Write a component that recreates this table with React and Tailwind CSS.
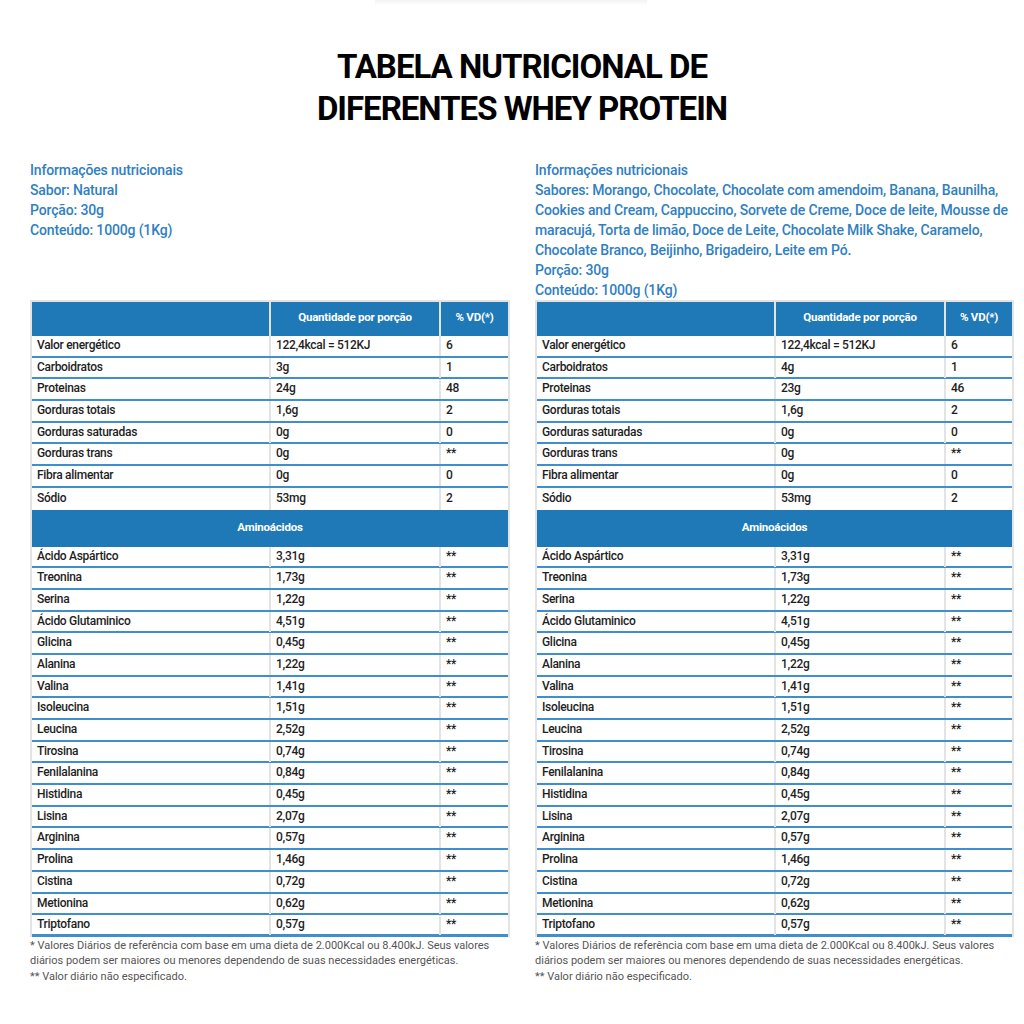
import React from 'react';

const nutrients = [
    ['Valor energético', '122,4kcal = 512KJ', '6'],
    ['Carboidratos', '3g', '1'],
    ['Proteinas', '24g', '48'],
    ['Gorduras totais', '1,6g', '2'],
    ['Gorduras saturadas', '0g', '0'],
    ['Gorduras trans', '0g', '**'],
    ['Fibra alimentar', '0g', '0'],
    ['Sódio', '53mg', '2'],
];

const nutrientsRight = [
    ['Valor energético', '122,4kcal = 512KJ', '6'],
    ['Carboidratos', '4g', '1'],
    ['Proteinas', '23g', '46'],
    ['Gorduras totais', '1,6g', '2'],
    ['Gorduras saturadas', '0g', '0'],
    ['Gorduras trans', '0g', '**'],
    ['Fibra alimentar', '0g', '0'],
    ['Sódio', '53mg', '2'],
];

const aminos = [
    ['Ácido Aspártico', '3,31g'],
    ['Treonina', '1,73g'],
    ['Serina', '1,22g'],
    ['Ácido Glutaminico', '4,51g'],
    ['Glicina', '0,45g'],
    ['Alanina', '1,22g'],
    ['Valina', '1,41g'],
    ['Isoleucina', '1,51g'],
    ['Leucina', '2,52g'],
    ['Tirosina', '0,74g'],
    ['Fenilalanina', '0,84g'],
    ['Histidina', '0,45g'],
    ['Lisina', '2,07g'],
    ['Arginina', '0,57g'],
    ['Prolina', '1,46g'],
    ['Cistina', '0,72g'],
    ['Metionina', '0,62g'],
    ['Triptofano', '0,57g'],
];

const Row = ({ cells, cols, border = 'border-b-2' }) => (
    <div className={`grid ${cols} h-[21.7px] ${border} border-[#3f8fcf]`}>
        {cells.map((c, i) => (
            <div
                key={i}
                className={`flex items-center pl-[5px] pb-[2px] text-[12px] font-medium tracking-[-0.3px] text-[#1e1e1e] ${i < 2 ? 'border-r-2 border-[#e3e3e3]' : ''}`}
            >
                {c}
            </div>
        ))}
    </div>
);

const NutritionTable = ({ rows, cols }) => (
    <div className="border-x-2 border-[#e3e3e3]">
        {/* Cabeçalho */}
        <div className={`grid ${cols} h-[36px] bg-[#1f79b7] border-t-2 border-[#e3e3e3]`}>
            <div className="border-r-2 border-[#e3e3e3]" />
            <div className="flex items-center justify-center pb-[3px] border-r-2 border-[#e3e3e3] text-[11.5px] font-bold text-white tracking-[-0.2px]">
                Quantidade por porção
            </div>
            <div className="flex items-center justify-center pb-[3px] text-[11.5px] font-bold text-white tracking-[-0.2px]">
                % VD(*)
            </div>
        </div>

        {rows.map((r, i) => (
            <Row key={r[0]} cells={r} cols={cols} border={i === rows.length - 1 ? 'border-b-0' : 'border-b-2'} />
        ))}

        <div className="h-[37px] bg-[#1f79b7] flex items-center justify-center text-[11.5px] font-bold text-white tracking-[-0.2px]">
            Aminoácidos
        </div>

        {aminos.map((a, i) => (
            <Row key={a[0]} cells={[a[0], a[1], '**']} cols={cols} border={i === aminos.length - 1 ? 'border-b-[3px]' : 'border-b-2'} />
        ))}
    </div>
);

const Footnote = () => (
    <div className="pt-[1px] text-[11px] leading-[15.5px] tracking-[0px] text-[#555]">
        <div className="whitespace-nowrap">* Valores Diários de referência com base em uma dieta de 2.000Kcal ou 8.400kJ. Seus valores</div>
        <div className="whitespace-nowrap">diários podem ser maiores ou menores dependendo de suas necessidades energéticas.</div>
        <div className="whitespace-nowrap">** Valor diário não especificado.</div>
    </div>
);

export default function App() {
    return (
        <div className="w-[1024px] h-[1024px] bg-white font-['Roboto',sans-serif] overflow-hidden">
            {/* Faint bar at top */}
            <div className="ml-[375px] w-[272px] h-[5px] bg-gradient-to-b from-[#f2f2f2] to-white" />

            {/* Title */}
            <h1 className="mt-[41px] pl-[20px] text-center text-[33px] leading-[42px] font-bold tracking-[-1px] text-black">
                TABELA NUTRICIONAL DE
                <br />
                DIFERENTES WHEY PROTEIN
            </h1>

            <div className="mt-[30px] flex pl-[30px] gap-[25px]">
                {/* Left column */}
                <div className="w-[480px] flex flex-col">
                    <div className="h-[140px] text-[14px] leading-[20px] font-medium tracking-[-0.15px] text-[#2f80c3]">
                        <div>Informações nutricionais</div>
                        <div>Sabor: Natural</div>
                        <div>Porção: 30g</div>
                        <div>Conteúdo: 1000g (1Kg)</div>
                    </div>
                    <NutritionTable rows={nutrients} cols="grid-cols-[239px_170px_1fr]" />
                    <Footnote />
                </div>

                {/* Right column */}
                <div className="w-[479px] flex flex-col">
                    <div className="h-[140px] text-[14px] leading-[20px] font-medium tracking-[-0.15px] text-[#2f80c3]">
                        <div>Informações nutricionais</div>
                        <div className="whitespace-nowrap">Sabores: Morango, Chocolate, Chocolate com amendoim, Banana, Baunilha,</div>
                        <div className="whitespace-nowrap">Cookies and Cream, Cappuccino, Sorvete de Creme, Doce de leite, Mousse de</div>
                        <div className="whitespace-nowrap">maracujá, Torta de limão, Doce de Leite, Chocolate Milk Shake, Caramelo,</div>
                        <div className="whitespace-nowrap">Chocolate Branco, Beijinho, Brigadeiro, Leite em Pó.</div>
                        <div>Porção: 30g</div>
                        <div>Conteúdo: 1000g (1Kg)</div>
                    </div>
                    <NutritionTable rows={nutrientsRight} cols="grid-cols-[239px_170px_1fr]" />
                    <Footnote />
                </div>
            </div>
        </div>
    );
}
